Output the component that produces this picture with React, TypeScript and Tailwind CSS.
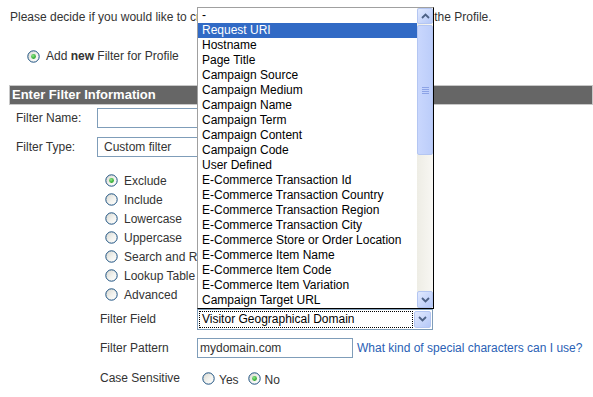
import React from "react";

function Radio({ checked }: { checked?: boolean }) {
  return (
    <svg width="13" height="13" viewBox="0 0 13 13" className="shrink-0 block">
      <defs>
        <linearGradient id="rf" x1="0" y1="0" x2="1" y2="1">
          <stop offset="0" stopColor="#d6d6cf" />
          <stop offset="0.55" stopColor="#f3f3ef" />
          <stop offset="1" stopColor="#ffffff" />
        </linearGradient>
        <radialGradient id="rd" cx="0.4" cy="0.35" r="0.7">
          <stop offset="0" stopColor="#8ee98a" />
          <stop offset="1" stopColor="#1b9a1b" />
        </radialGradient>
      </defs>
      <circle cx="6.5" cy="6.5" r="5.7" fill="url(#rf)" stroke="#1c5180" strokeWidth="1" />
      {checked && <circle cx="6.5" cy="6.5" r="2.4" fill="url(#rd)" />}
    </svg>
  );
}

function Chevron({ up }: { up?: boolean }) {
  return (
    <svg width="9" height="6" viewBox="0 0 9 6" className="block">
      <path
        d={up ? "M1 5 L4.5 1.5 L8 5" : "M1 1 L4.5 4.5 L8 1"}
        fill="none"
        stroke="#4d6185"
        strokeWidth="1.8"
      />
    </svg>
  );
}

function ScrollBtn({ up, h }: { up?: boolean; h: string }) {
  return (
    <div
      className={`${h} rounded-[2px] border border-[#b4c6f2] bg-linear-to-br from-[#e1e9fe] to-[#b5c8f8] flex items-center justify-center`}
    >
      <Chevron up={up} />
    </div>
  );
}

const options = [
  "-",
  "Request URI",
  "Hostname",
  "Page Title",
  "Campaign Source",
  "Campaign Medium",
  "Campaign Name",
  "Campaign Term",
  "Campaign Content",
  "Campaign Code",
  "User Defined",
  "E-Commerce Transaction Id",
  "E-Commerce Transaction Country",
  "E-Commerce Transaction Region",
  "E-Commerce Transaction City",
  "E-Commerce Store or Order Location",
  "E-Commerce Item Name",
  "E-Commerce Item Code",
  "E-Commerce Item Variation",
  "Campaign Target URL",
];

const filterKinds = [
  "Exclude",
  "Include",
  "Lowercase",
  "Uppercase",
  "Search and Replace",
  "Lookup Table",
  "Advanced",
];

export default function App() {
  return (
    <div className="relative w-[593px] h-[397px] overflow-hidden bg-white font-['Liberation_Sans',Arial,sans-serif] text-[12px] text-[#333]">
      <p className="pl-[10px] pt-[10px] leading-[14px] whitespace-nowrap">
        Please decide if you would like to create a new filter or apply an existing filter to the Profile.
      </p>

      <div className="mt-[25px] pl-[27px] h-[14px] flex items-center gap-[6px]">
        <Radio checked />
        <span>
          Add <b>new</b> Filter for Profile
        </span>
      </div>

      <div className="mt-[22px] ml-[9px] h-[20px] bg-[#666] border border-[#c8c8c8] pl-[2px] flex items-center">
        <span className="text-white font-bold text-[13px] leading-[16px]">Enter Filter Information</span>
      </div>

      <div className="mt-[3px] pl-[16px] flex items-center h-[20px]">
        <span className="w-[81px]">Filter Name:</span>
        <div className="w-[200px] h-[20px] border border-[#7f9db9] bg-white" />
      </div>

      <div className="mt-[9px] pl-[16px] flex items-center h-[20px]">
        <span className="w-[81px]">Filter Type:</span>
        <div className="w-[200px] h-[20px] border border-[#7f9db9] bg-white pl-[6px] flex items-center">
          Custom filter
        </div>
      </div>

      <div className="mt-[14px] pl-[105px] flex flex-col">
        {filterKinds.map((k, i) => (
          <div key={k} className="h-[19px] flex items-center gap-[6px]">
            <Radio checked={i === 0} />
            <span>{k}</span>
          </div>
        ))}
      </div>

      <div className="mt-[5px] pl-[100px] flex items-center h-[20px]">
        <span className="w-[97px]">Filter Field</span>
        <div className="w-[236px] h-[21px] border border-[#7f9db9] bg-white flex items-center pl-[1px] pr-[1px]">
          <div className="flex-1 h-[17px] border border-dotted border-black pl-[2px] flex items-center text-black">
            Visitor Geographical Domain
          </div>
          <div className="ml-[1px] w-[17px]">
            <ScrollBtn h="h-[17px]" />
          </div>
        </div>
      </div>

      <div className="mt-[9px] pl-[100px] flex items-center h-[20px]">
        <span className="w-[97px]">Filter Pattern</span>
        <div className="w-[156px] h-[20px] border border-[#7f9db9] bg-white pl-[2px] flex items-center">
          mydomain.com
        </div>
        <a className="ml-[4px] text-[#2a5fb5] cursor-pointer">What kind of special characters can I use?</a>
      </div>

      <div className="mt-[10px] pl-[100px] flex items-center h-[20px]">
        <span className="w-[97px]">Case Sensitive</span>
        <div className="pl-[5px] flex items-center">
          <Radio />
          <span className="ml-[4px] mt-[3px]">Yes</span>
          <span className="ml-[9px]">
            <Radio checked />
          </span>
          <span className="ml-[4px] mt-[3px]">No</span>
        </div>
      </div>

      {/* Open dropdown list */}
      <div className="absolute left-[197px] top-[7px] w-[237px] h-[302px] bg-white border-t border-l border-[#a0a0a0] border-r border-r-black border-b border-b-black flex text-black">
        <div className="flex-1 flex flex-col">
          {options.map((o, i) => (
            <div
              key={o}
              className={`h-[15px] leading-[15px] pl-[4px] whitespace-nowrap ${
                i === 1 ? "bg-[#316ac5] text-white" : ""
              }`}
            >
              {o}
            </div>
          ))}
        </div>
        <div className="w-[16px] flex flex-col bg-linear-to-r from-[#eeede5] to-[#f8f7f3]">
          <ScrollBtn up h="h-[16px]" />
          <div className="mt-[1px] h-[130px] rounded-[2px] border border-[#b4c6f2] bg-linear-to-r from-[#c9d7fd] to-[#bccdfa] flex items-center justify-center">
            <div className="flex flex-col gap-[1px]">
              <div className="w-[7px] h-[1px] bg-[#8ca3e6]" />
              <div className="w-[7px] h-[1px] bg-[#8ca3e6]" />
              <div className="w-[7px] h-[1px] bg-[#8ca3e6]" />
              <div className="w-[7px] h-[1px] bg-[#8ca3e6]" />
            </div>
          </div>
          <div className="flex-1" />
          <ScrollBtn h="h-[17px]" />
        </div>
      </div>
    </div>
  );
}
